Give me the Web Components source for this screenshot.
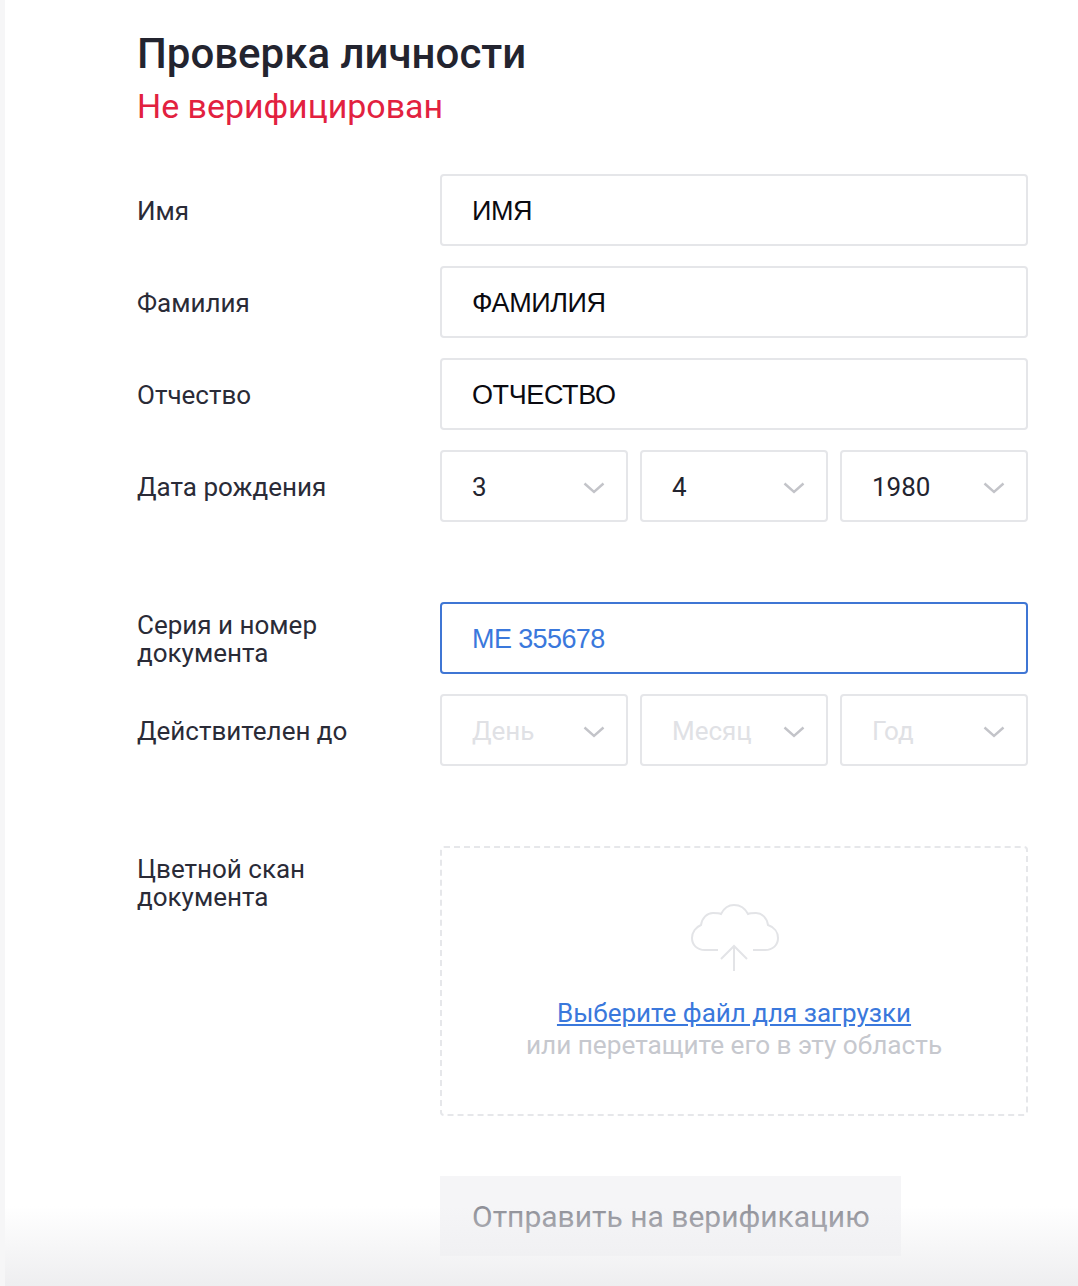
<!DOCTYPE html>
<html lang="ru">
<head>
<meta charset="utf-8">
<title>Проверка личности</title>
<style>
  html, body { margin: 0; height: 100%; background: #fff; }
  body { font-family: Roboto, "Liberation Sans", sans-serif; overflow: hidden; }
</style>
</head>
<body>
<kyc-page>
  <kyc-row label="Имя"><kyc-input value="ИМЯ"></kyc-input></kyc-row>
  <kyc-row label="Фамилия"><kyc-input value="ФАМИЛИЯ"></kyc-input></kyc-row>
  <kyc-row label="Отчество"><kyc-input value="ОТЧЕСТВО"></kyc-input></kyc-row>
  <kyc-row label="Дата рождения">
    <kyc-date>
      <kyc-select value="3"></kyc-select>
      <kyc-select value="4"></kyc-select>
      <kyc-select value="1980"></kyc-select>
    </kyc-date>
  </kyc-row>
  <kyc-row label="Серия и номер документа" class="section"><kyc-input value="МЕ 355678" focused></kyc-input></kyc-row>
  <kyc-row label="Действителен до">
    <kyc-date>
      <kyc-select value="День" placeholder></kyc-select>
      <kyc-select value="Месяц" placeholder></kyc-select>
      <kyc-select value="Год" placeholder></kyc-select>
    </kyc-date>
  </kyc-row>
  <kyc-row label="Цветной скан документа" class="section" top><kyc-upload></kyc-upload></kyc-row>
  <kyc-row label="" class="submit"><kyc-button>Отправить на верификацию</kyc-button></kyc-row>
</kyc-page>

<script>
class KycPage extends HTMLElement {
  constructor() {
    super();
    this.attachShadow({ mode: "open" });
  }
  connectedCallback() {
    this.shadowRoot.innerHTML = `
      <style>
        :host {
          display: block;
          position: relative;
          height: 1286px;
          box-sizing: border-box;
          overflow: hidden;
          background: #fff;
          border-left: 5px solid #f6f6f7;
          padding: 31px 50px 0 133px;
        }
        h1 {
          margin: 0 0 0 -1px;
          font: 500 42px/46px Roboto, sans-serif;
          color: #23242f;
        }
        p {
          margin: 10px 0 0 -1px;
          font: 400 33.9px/40px Roboto, sans-serif;
          color: #e2213f;
        }
        .rows {
          display: flex;
          flex-direction: column;
          gap: 20px;
          margin-top: 47px;
        }
        ::slotted(.section) { margin-top: 60px; }
        ::slotted(.submit) { margin-top: 40px; }
        .fade {
          position: absolute;
          left: -5px;
          right: 0;
          bottom: 0;
          height: 80px;
          background: linear-gradient(rgba(238,238,240,0), #eeeef0);
          pointer-events: none;
        }
      </style>
      <h1>Проверка личности</h1>
      <p>Не верифицирован</p>
      <div class="rows"><slot></slot></div>
      <div class="fade"></div>
    `;
  }
}

class KycRow extends HTMLElement {
  constructor() {
    super();
    this.attachShadow({ mode: "open" });
  }
  connectedCallback() {
    this.shadowRoot.innerHTML = `
      <style>
        :host {
          display: grid;
          grid-template-columns: 302px 588px;
          align-items: center;
        }
        .label {
          font: 400 26px/28px Roboto, sans-serif;
          color: #2a2b37;
          margin-left: -1px;
          padding: 2px 70px 0 0;
        }
        :host([top]) { align-items: start; }
        :host([top]) .label { padding-top: 9px; }
      </style>
      <div class="label"></div>
      <div class="field"><slot></slot></div>
    `;
    this.shadowRoot.querySelector(".label").textContent = this.getAttribute("label");
  }
}

class KycInput extends HTMLElement {
  constructor() {
    super();
    this.attachShadow({ mode: "open" });
  }
  connectedCallback() {
    this.shadowRoot.innerHTML = `
      <style>
        :host {
          display: flex;
          align-items: center;
          box-sizing: border-box;
          height: 72px;
          padding: 2px 30px 0;
          border: 2px solid #e5e6e9;
          border-radius: 4px;
          background: #fff;
          font: 400 27px/32px "Liberation Sans", Arial, sans-serif;
          letter-spacing: -0.4px;
          color: #0a0a10;
        }
        :host([focused]) {
          border-color: #3f76d4;
          color: #3a78dc;
          letter-spacing: -0.6px;
        }
      </style>
      <span></span>
    `;
    this.shadowRoot.querySelector("span").textContent = this.getAttribute("value");
  }
}

class KycDate extends HTMLElement {
  constructor() {
    super();
    this.attachShadow({ mode: "open" });
  }
  connectedCallback() {
    this.shadowRoot.innerHTML = `
      <style>
        :host {
          display: grid;
          grid-template-columns: repeat(3, 188px);
          column-gap: 12px;
        }
      </style>
      <slot></slot>
    `;
  }
}

class KycSelect extends HTMLElement {
  constructor() {
    super();
    this.attachShadow({ mode: "open" });
  }
  connectedCallback() {
    this.shadowRoot.innerHTML = `
      <style>
        :host {
          display: flex;
          align-items: center;
          justify-content: space-between;
          box-sizing: border-box;
          height: 72px;
          padding: 2px 21px 0 30px;
          border: 2px solid #e5e6e9;
          border-radius: 4px;
          background: #fff;
          font: 400 26px/32px Roboto, sans-serif;
          color: #23242f;
        }
        :host([placeholder]) { color: #e0e1e5; }
        svg { display: block; flex: none; margin-top: 2px; }
      </style>
      <span></span>
      <svg width="22" height="12" viewBox="0 0 22 12" fill="none" stroke="#c3c4c9" stroke-width="2.4">
        <path d="M1.5 1.5 L11 10 L20.5 1.5"/>
      </svg>
    `;
    this.shadowRoot.querySelector("span").textContent = this.getAttribute("value");
  }
}

class KycUpload extends HTMLElement {
  constructor() {
    super();
    this.attachShadow({ mode: "open" });
  }
  connectedCallback() {
    this.shadowRoot.innerHTML = `
      <style>
        :host {
          display: flex;
          flex-direction: column;
          align-items: center;
          box-sizing: border-box;
          height: 270px;
          padding-top: 56px;
          border: 2px dashed #e6e7ea;
          border-radius: 4px;
          font: 400 26px/32px Roboto, sans-serif;
          text-align: center;
        }
        svg { display: block; }
        a {
          margin-top: 23px;
          color: #3a78dc;
          text-decoration: underline;
        }
        span { color: #c6c8ce; font-size: 26.2px; }
      </style>
      <svg width="90" height="70" viewBox="0 0 90 70" fill="none" stroke="#e3e4e7" stroke-width="2">
        <path d="M29 46 H16 C8 46 3 41 3 34 C3 28 7 23 12 21 C13 14 18 9 24 9 C27 9 30 9 32 10 C35 4 40 1 45 1 C51 1 56 4 59 10 C61 9 64 9 67 9 C73 9 78 14 79 21 C85 23 89 28 89 34 C89 41 84 46 76 46 H64"/>
        <path d="M45 67 V43 M32 55 L45 42 L58 55"/>
      </svg>
      <a href="#">Выберите файл для загрузки</a>
      <span>или перетащите его в эту область</span>
    `;
  }
}

class KycButton extends HTMLElement {
  constructor() {
    super();
    this.attachShadow({ mode: "open" });
  }
  connectedCallback() {
    this.shadowRoot.innerHTML = `
      <style>
        :host {
          display: inline-flex;
          align-items: center;
          justify-self: start;
          box-sizing: border-box;
          height: 80px;
          padding: 2px 31px 0 32px;
          background: #f5f5f7;
          font: 400 30px/32px Roboto, sans-serif;
          color: #8d8e96;
        }
      </style>
      <slot></slot>
    `;
  }
}

customElements.define("kyc-page", KycPage);
customElements.define("kyc-row", KycRow);
customElements.define("kyc-input", KycInput);
customElements.define("kyc-date", KycDate);
customElements.define("kyc-select", KycSelect);
customElements.define("kyc-upload", KycUpload);
customElements.define("kyc-button", KycButton);
</script>
</body>
</html>
